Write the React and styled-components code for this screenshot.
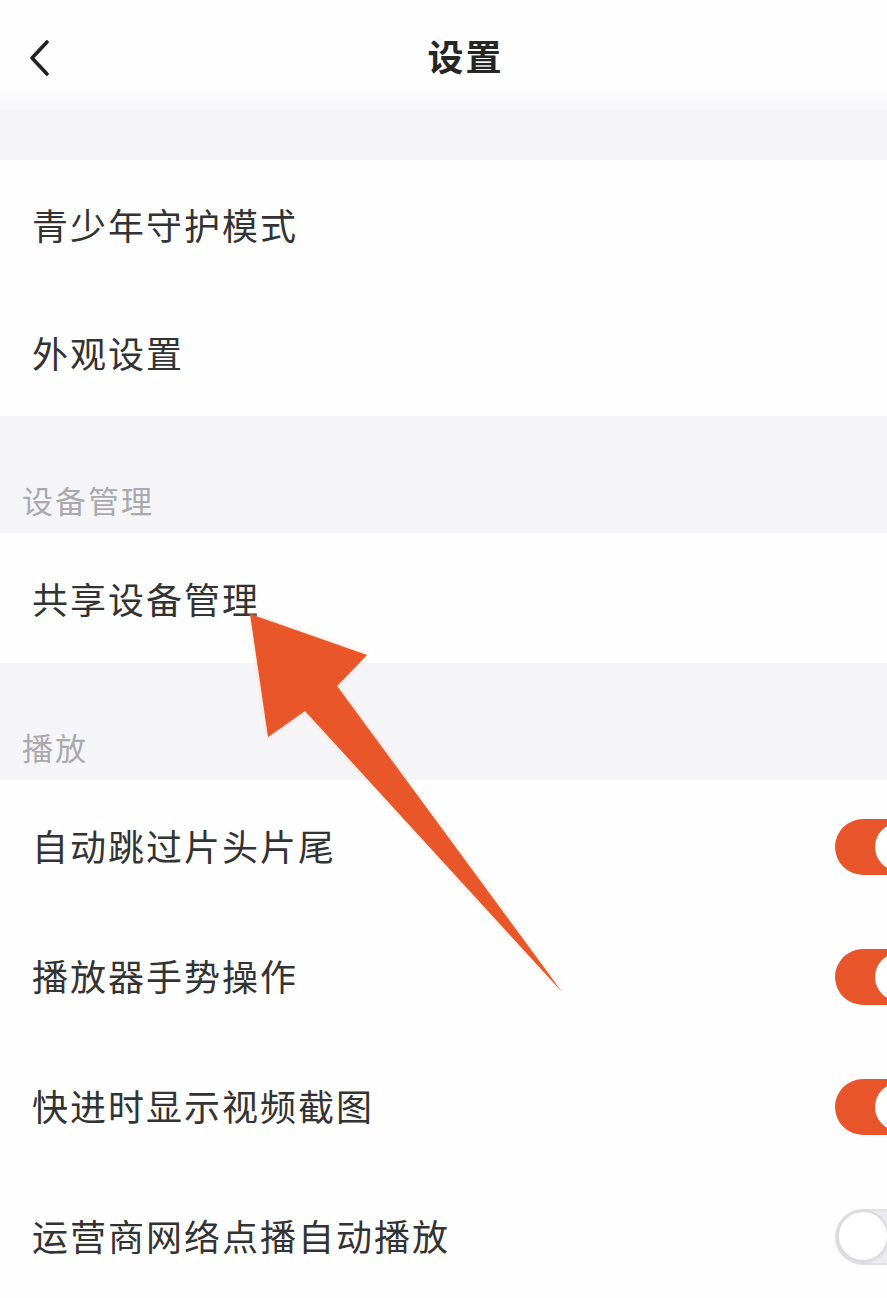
import React from 'react'
import styled, { createGlobalStyle } from 'styled-components'

const GlobalStyle = createGlobalStyle`
  html, body {
    margin: 0;
    padding: 0;
    background: #f5f5f8;
  }
  body {
    font-family: "Noto Sans CJK SC", "Noto Sans", sans-serif;
  }
`;

const Page = styled.div`
  position: relative;
  width: 887px;
  height: 1298px;
  overflow: hidden;
  background: #f5f5f8;
`;

const Header = styled.div`
  height: 110px;
  display: flex;
  align-items: center;
  justify-content: center;
  position: relative;
  background: linear-gradient(#fdfdfe 80%, #f7f7f9);
`;

const Back = styled.div`
  position: absolute;
  left: 24px;
  top: 38px;
  width: 30px;
  height: 40px;
  display: flex;
  align-items: center;
  justify-content: center;
`;

const Title = styled.h1`
  margin: 0;
  font-size: 36px;
  font-weight: 700;
  color: #262626;
  letter-spacing: 2px;
  line-height: 1;
  padding-left: 44px;
`;

const Spacer = styled.div`
  height: 50px;
`;

const Group = styled.div`
  background: #fefefe;
`;

const Row = styled.div`
  height: ${p => p.h || 128}px;
  display: flex;
  align-items: center;
  justify-content: space-between;
  padding-left: 32px;
`;

const Label = styled.span`
  font-size: 36px;
  color: #333;
  letter-spacing: 2px;
  line-height: 1;
`;

const SectionLabel = styled.div`
  height: 117px;
  box-sizing: border-box;
  padding: 68px 0 0 22px;
  font-size: 31px;
  color: #a9a9ae;
  letter-spacing: 2px;
  line-height: 1;
`;

const Track = styled.div`
  flex: none;
  width: 96px;
  height: 56px;
  box-sizing: border-box;
  border-radius: 28px;
  margin-right: -44px;
  margin-top: 4px;
  position: relative;
  background: ${p => (p.on ? '#e8552a' : '#ececef')};
  border: ${p => (p.on ? 'none' : '2px solid #e2e2e6')};
`;

const Knob = styled.div`
  position: absolute;
  top: ${p => (p.on ? 4 : -1)}px;
  left: ${p => (p.on ? 40 : 0)}px;
  width: ${p => (p.on ? 48 : 52)}px;
  height: ${p => (p.on ? 48 : 52)}px;
  border-radius: 50%;
  background: #fff;
  box-sizing: border-box;
  border: ${p => (p.on ? 'none' : '2px solid #dcdce0')};
  box-shadow: ${p => (p.on ? 'none' : '0 1px 3px rgba(0,0,0,0.08)')};
`;

const ArrowLayer = styled.svg`
  position: absolute;
  left: 0;
  top: 0;
  pointer-events: none;
  filter: drop-shadow(0 0 2px rgba(255, 200, 170, 0.7));
`;

function Toggle({ on }) {
  return (
    <Track on={on}>
      <Knob on={on} />
    </Track>
  )
}

const playback = [
  { label: '自动跳过片头片尾', on: true },
  { label: '播放器手势操作', on: true },
  { label: '快进时显示视频截图', on: true },
  { label: '运营商网络点播自动播放', on: false },
]

export default function App() {
  return (
    <Page>
      <GlobalStyle />
      <Header>
        <Back>
          <svg width="24" height="38" viewBox="0 0 24 38">
            <path d="M20 3 L5 19 L20 35" fill="none" stroke="#222" strokeWidth="3.6" strokeLinecap="round" strokeLinejoin="round" />
          </svg>
        </Back>
        <Title>设置</Title>
      </Header>
      <Spacer />
      <Group>
        <Row><Label>青少年守护模式</Label></Row>
        <Row><Label>外观设置</Label></Row>
      </Group>
      <SectionLabel>设备管理</SectionLabel>
      <Group>
        <Row h={130}><Label>共享设备管理</Label></Row>
      </Group>
      <SectionLabel>播放</SectionLabel>
      <Group>
        {playback.map(item => (
          <Row h={130} key={item.label}>
            <Label>{item.label}</Label>
            <Toggle on={item.on} />
          </Row>
        ))}
      </Group>
      <ArrowLayer width="887" height="1298" viewBox="0 0 887 1298">
        <polygon
          points="250,614 367,655 337,686 562,992 305,711 268,737"
          fill="#e8562a"
        />
      </ArrowLayer>
    </Page>
  )
}
